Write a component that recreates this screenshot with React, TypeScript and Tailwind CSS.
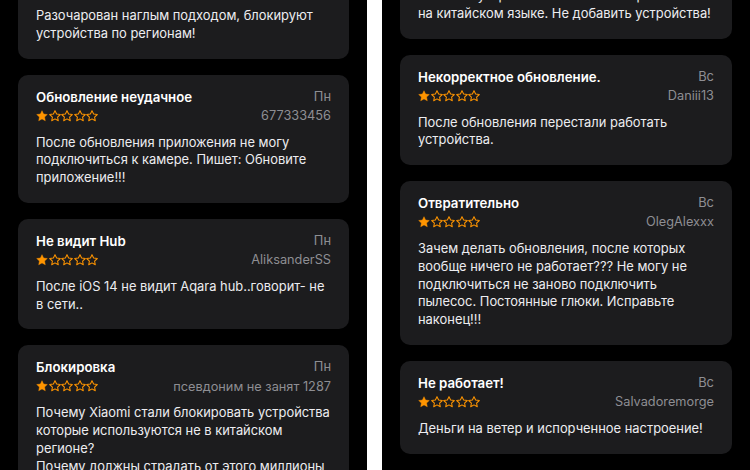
type Review = {
  title?: string;
  day?: string;
  author?: string;
  lines: string[];
};

const leftReviews: Review[] = [
  { lines: ["Разочарован наглым подходом, блокируют", "устройства по регионам!"] },
  {
    title: "Обновление неудачное",
    day: "Пн",
    author: "677333456",
    lines: ["После обновления приложения не могу", "подключиться к камере. Пишет: Обновите", "приложение!!!"],
  },
  {
    title: "Не видит Hub",
    day: "Пн",
    author: "AliksanderSS",
    lines: ["После iOS 14 не видит Aqara hub..говорит- не", "в сети.."],
  },
  {
    title: "Блокировка",
    day: "Пн",
    author: "псевдоним не занят 1287",
    lines: [
      "Почему Xiaomi стали блокировать устройства",
      "которые используются не в китайском",
      "регионе?",
      "Почему должны страдать от этого миллионы",
    ],
  },
];

const rightReviews: Review[] = [
  { lines: ["В списке устройств какое не выбери ошибка", "на китайском языке. Не добавить устройства!"] },
  {
    title: "Некорректное обновление.",
    day: "Вс",
    author: "Daniii13",
    lines: ["После обновления перестали работать", "устройства."],
  },
  {
    title: "Отвратительно",
    day: "Вс",
    author: "OlegAlexxx",
    lines: [
      "Зачем делать обновления, после которых",
      "вообще ничего не работает??? Не могу не",
      "подключиться не заново подключить",
      "пылесос. Постоянные глюки. Исправьте",
      "наконец!!!",
    ],
  },
  {
    title: "Не работает!",
    day: "Вс",
    author: "Salvadoremorge",
    lines: ["Деньги на ветер и испорченное настроение!"],
  },
  { lines: [] },
];

function Star({ filled }: { filled: boolean }) {
  return (
    <svg viewBox="1 1 22 22" className="h-[12px] w-[12px]">
      <path
        d="M12 2.2l2.95 6.2 6.8.85-5 4.7 1.3 6.75L12 17.35 5.95 20.7l1.3-6.75-5-4.7 6.8-.85z"
        fill={filled ? "#ff9500" : "none"}
        stroke="#ff9500"
        strokeWidth={filled ? 0.8 : 1.9}
        strokeLinejoin="round"
      />
    </svg>
  );
}

function Body({ lines }: { lines: string[] }) {
  return (
    <>
      {lines.map((l) => (
        <div key={l} className="whitespace-nowrap text-[12.9px] leading-[17.75px] text-[#ececf0]">
          {l}
        </div>
      ))}
    </>
  );
}

// partial card cut by the top of the screen
function TopCard({ lines, className }: { lines: string[]; className: string }) {
  return (
    <div className={`rounded-b-[10px] bg-[#1c1c1e] px-[18px] pb-4 ${className}`}>
      <Body lines={lines} />
    </div>
  );
}

function Card({ review }: { review: Review }) {
  if (!review.title) {
    return <div className="h-[120px] rounded-[10px] bg-[#1c1c1e]" />;
  }

  return (
    <div className="rounded-[10px] bg-[#1c1c1e] px-[18px] pt-[13px] pb-4">
      <div className="flex items-center justify-between leading-[18px]">
        <span className="text-[13.25px] font-semibold text-white">{review.title}</span>
        <span className="text-[12.9px] text-[#8e8e93]">{review.day}</span>
      </div>
      <div className="flex h-5 items-center justify-between">
        <div className="flex gap-[0.5px]">
          <Star filled />
          <Star filled={false} />
          <Star filled={false} />
          <Star filled={false} />
          <Star filled={false} />
        </div>
        <span className="text-[12.75px] text-[#8e8e93]">{review.author}</span>
      </div>
      <div className="mt-2">
        <Body lines={review.lines} />
      </div>
    </div>
  );
}

export default function App() {
  const [leftTop, ...leftRest] = leftReviews;
  const [rightTop, ...rightRest] = rightReviews;

  return (
    <div
      className="flex h-[470px] w-[750px] gap-[15px] overflow-hidden bg-white"
      style={{ fontFamily: "Inter, 'Noto Sans', sans-serif" }}
    >
      {/* left phone */}
      <div className="h-full w-[367px] overflow-hidden bg-black px-[18px]">
        <div className="flex flex-col gap-4">
          <TopCard lines={leftTop.lines} className="pt-[7px]" />
          {leftRest.map((r, i) => (
            <Card key={i} review={r} />
          ))}
        </div>
      </div>

      {/* right phone */}
      <div className="h-full w-[368px] overflow-hidden bg-black px-[18px]">
        <div className="-mt-[13px] flex flex-col gap-4">
          <TopCard lines={rightTop.lines} className="pt-0" />
          {rightRest.map((r, i) => (
            <Card key={i} review={r} />
          ))}
        </div>
      </div>
    </div>
  );
}
